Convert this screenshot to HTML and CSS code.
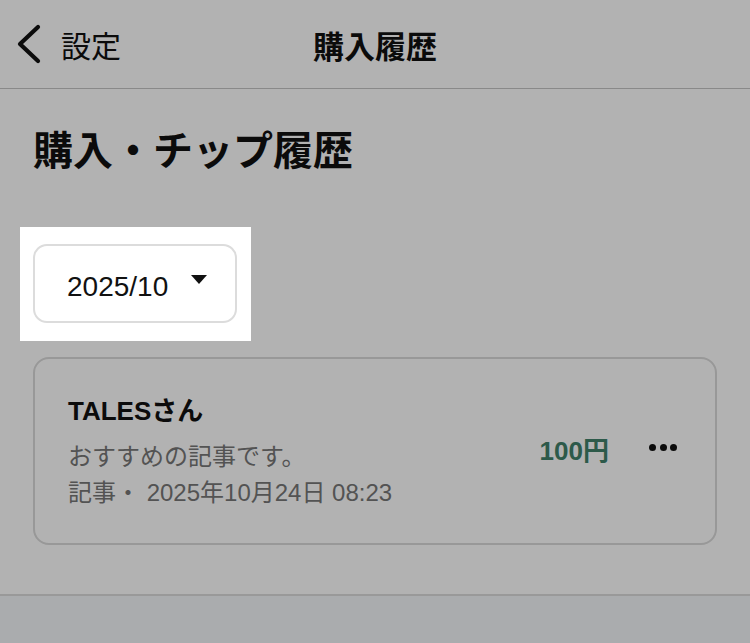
FILE: index.html
```html
<!DOCTYPE html>
<html lang="ja">
  <head>
    <meta charset="utf-8" />
    <meta name="viewport" content="width=device-width, initial-scale=1.0">
    <title>購入履歴</title>
    <link rel="stylesheet" href="styles.css">
  </head>

  <body>
    <header class="topbar">
      <a class="back" href="#">
        <svg class="back-icon" width="26" height="40" viewBox="0 0 26 40">
          <path d="M22 3 L4 20 L22 37" fill="none" stroke="#111" stroke-width="4.2" stroke-linecap="round" stroke-linejoin="round" />
        </svg>
        <span>設定</span>
      </a>
      <div class="topbar-title">購入履歴</div>
      <div></div>
    </header>

    <main class="content">
      <h1 class="heading">購入・チップ履歴</h1>

      <!-- month picker, highlighted by the tour -->
      <div class="spotlight">
        <button class="month-select">
          <span class="month-value">2025/10</span>
          <span class="caret"></span>
        </button>
      </div>

      <div class="history-card">
        <div class="history-info">
          <div class="history-name">TALESさん</div>
          <div class="history-desc">おすすめの記事です。</div>
          <div class="history-meta">記事・ 2025年10月24日 08:23</div>
        </div>
        <div class="history-price">100円</div>
        <button class="more">
          <span class="dot"></span><span class="dot"></span><span class="dot"></span>
        </button>
      </div>
    </main>

    <footer class="bottombar"></footer>
  </body>
</html>
```

FILE: styles.css
```css
body {
  margin: 0;
  min-height: 100vh;
  display: flex;
  flex-direction: column;
  background: #fff;
  color: #111;
  font-family: "Liberation Sans", "Noto Sans CJK JP", sans-serif;
  overflow: hidden;
}

/* header */
.topbar {
  height: 88px;
  display: grid;
  grid-template-columns: 1fr auto 1fr;
  align-items: center;
  border-bottom: 1px solid #c4c4c4;
}

.back {
  display: flex;
  align-items: center;
  gap: 19px;
  padding-left: 16px;
  color: #111;
  text-decoration: none;
  font-family: "Noto Sans CJK JP", sans-serif;
  font-size: 30px;
}

.back-icon {
  display: block;
}

.topbar-title {
  font-family: "Noto Sans CJK JP", sans-serif;
  font-size: 31px;
  font-weight: 700;
}

/* page body */
.content {
  flex: 1;
  padding: 0 33px;
}

.heading {
  margin: 35px 0 0;
  font-family: "Noto Sans CJK JP", sans-serif;
  font-size: 40px;
  line-height: 48px;
  font-weight: 700;
}

.spotlight {
  position: relative;
  z-index: 5;
  width: max-content;
  margin: 55px 0 16px -13px;
  padding: 17px 14px 18px 13px;
  background: #fff;
  box-shadow: 0 0 0 2000px rgba(0, 0, 0, 0.3);
}

.month-select {
  display: flex;
  align-items: center;
  gap: 23px;
  box-sizing: border-box;
  width: 204px;
  height: 79px;
  padding: 6px 27px 0 32px;
  background: #fff;
  border: 2px solid #dcdcdc;
  border-radius: 14px;
  font-family: "Liberation Sans", sans-serif;
  font-size: 28px;
  color: #111;
}

.caret {
  width: 0;
  height: 0;
  margin-bottom: 14px;
  border-left: 8px solid transparent;
  border-right: 8px solid transparent;
  border-top: 9px solid #111;
}

/* history entry */
.history-card {
  display: flex;
  align-items: center;
  box-sizing: border-box;
  height: 188px;
  padding: 0 38px 0 33px;
  border: 2px solid #dadada;
  border-radius: 16px;
  margin-bottom: 49px;
}

.history-info {
  flex: 1;
  padding-top: 2px;
}

.history-name {
  font-size: 26px;
  font-weight: 700;
  line-height: 34px;
  margin-bottom: 11px;
}

.history-desc,
.history-meta {
  font-size: 24px;
  line-height: 36px;
  color: #777;
}

.history-price {
  font-size: 26px;
  font-weight: 700;
  color: #41816a;
  margin-right: 40px;
  margin-bottom: 6px;
}

.more {
  display: flex;
  gap: 3.5px;
  padding: 0;
  border: 0;
  background: none;
  margin-bottom: 8px;
}

.dot {
  width: 7px;
  height: 7px;
  border-radius: 50%;
  background: #111;
}

.bottombar {
  height: 48px;
  border-top: 2px solid #dcdcdc;
  background: #f4f6f9;
}
```
